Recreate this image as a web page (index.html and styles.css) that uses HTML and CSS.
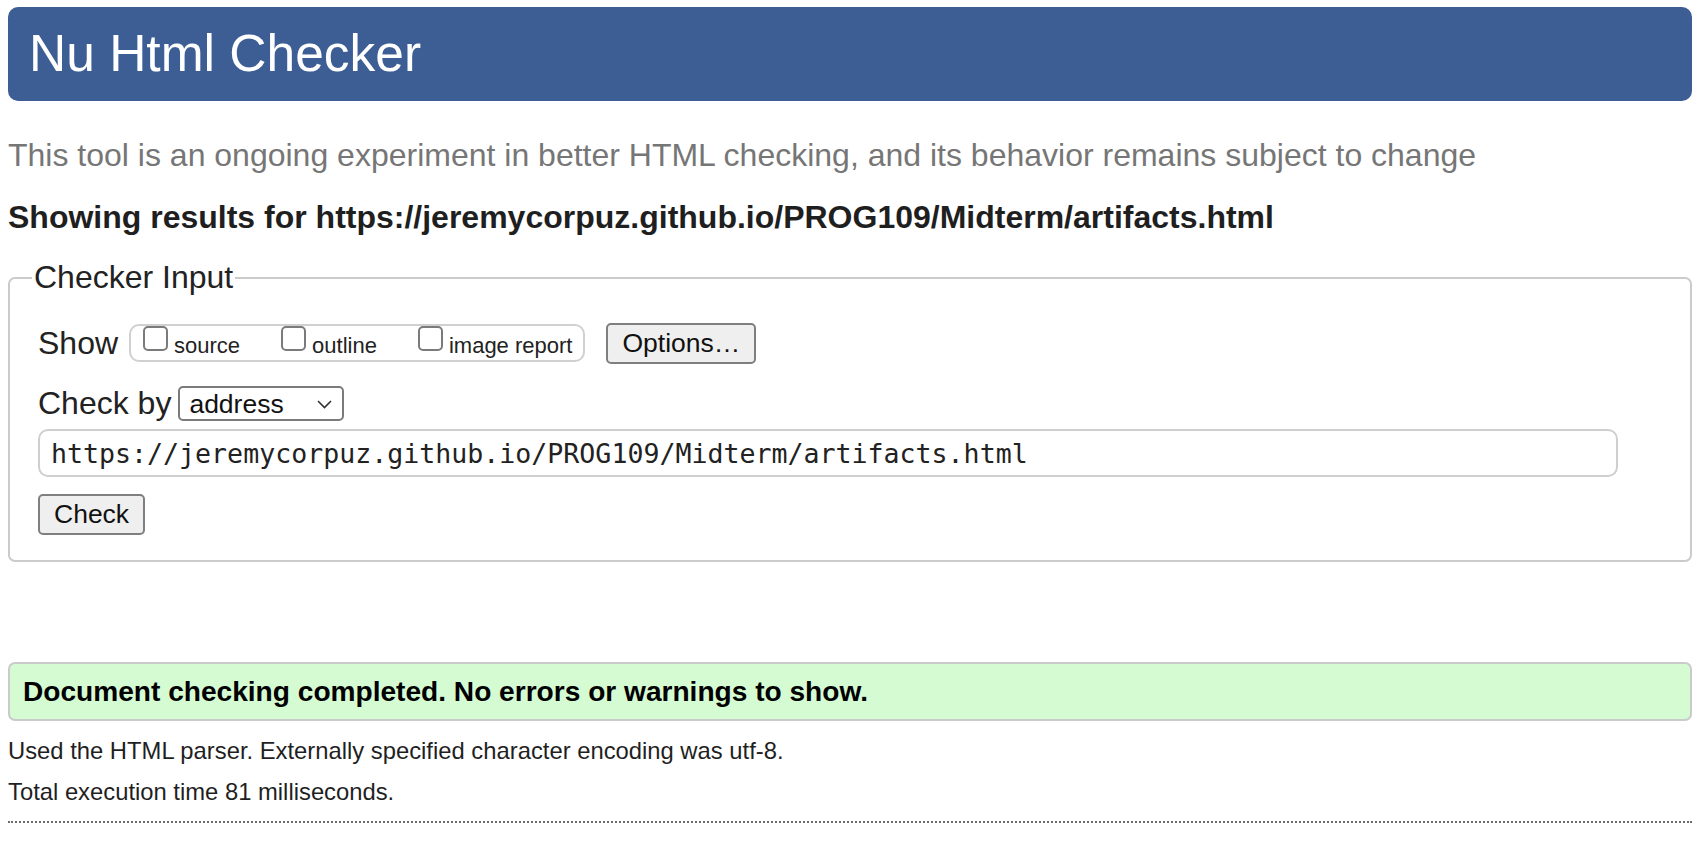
FILE: index.html
```html
<!DOCTYPE html>
<html lang="en">
<head>
<meta charset="utf-8">
<title>Nu Html Checker</title>
<link rel="stylesheet" href="styles.css">
</head>
<body>
<h1 class="banner">Nu Html Checker</h1>
<p class="lede">This tool is an ongoing experiment in better HTML checking, and its behavior remains subject to change</p>
<p class="results-for">Showing results for https://jeremycorpuz.github.io/PROG109/Midterm/artifacts.html</p>
<form class="checker">
  <fieldset class="input-set">
    <legend class="input-legend">Checker Input</legend>
    <div class="input-body">
      <div class="row show-row">
        <span class="row-label">Show</span>
        <div class="toggles">
          <label class="toggle"><input type="checkbox" class="box"><span class="toggle-text">source</span></label>
          <label class="toggle"><input type="checkbox" class="box"><span class="toggle-text">outline</span></label>
          <label class="toggle"><input type="checkbox" class="box"><span class="toggle-text">image report</span></label>
        </div>
        <button type="button" class="btn options">Options…</button>
      </div>
      <div class="row by-row">
        <label class="row-label" for="by">Check by</label>
        <span class="select-wrap">
          <select id="by" class="by-select"><option>address</option></select>
          <svg class="chev" viewBox="0 0 15 9" aria-hidden="true"><path d="M1 1 L7.5 7.5 L14 1" fill="none" stroke="#333" stroke-width="1.6"/></svg>
        </span>
      </div>
      <input class="url" type="text" value="https://jeremycorpuz.github.io/PROG109/Midterm/artifacts.html">
      <div class="submit-row"><button type="button" class="btn check">Check</button></div>
    </div>
  </fieldset>
</form>
<div class="success"><p class="success-text">Document checking completed. No errors or warnings to show.</p></div>
<p class="meta meta-first">Used the HTML parser. Externally specified character encoding was utf-8.</p>
<p class="meta meta-second">Total execution time 81 milliseconds.</p>
<hr class="rule">
</body>
</html>
```
FILE: styles.css
```css
html { background: #fff; }
body {
  margin: 0;
  padding: 7px 14px 40px 8px;
  font-family: "Liberation Sans", Arial, Helvetica, sans-serif;
  color: #222;
  background: #fff;
}
.banner {
  margin: 0;
  height: 94px;
  display: flex;
  align-items: center;
  padding-left: 21px;
  background: #3d5e94;
  color: #fff;
  font-size: 51.5px;
  font-weight: normal;
  line-height: 1;
  border-radius: 10px;
}
.lede {
  margin: 36px 0 0;
  font-size: 32px;
  line-height: 37px;
  color: #767676;
}
.results-for {
  margin: 25px 0 0;
  font-size: 32px;
  line-height: 37px;
  font-weight: bold;
  color: #1f1f1f;
}
.checker { margin: 23px 0 0; }
.input-set {
  margin: 0;
  min-width: 0;
  padding: 26px 27px 25px 22px;
  border: 2px solid #cbcbcb;
  border-radius: 7px;
}
.input-legend {
  padding: 0 2px;
  font-size: 32px;
  line-height: 37px;
  color: #222;
}
.input-body { padding-left: 6px; }
.row { display: flex; align-items: center; }
.show-row { height: 42px; }
.row-label {
  font-size: 32px;
  line-height: 37px;
  color: #222;
}
.toggles {
  margin-left: 11px;
  display: flex;
  align-items: center;
  gap: 41px;
  height: 38px;
  box-sizing: border-box;
  border: 2px solid #d0d0d0;
  border-radius: 10px;
  padding: 0 11px 0 12px;
}
.toggle {
  display: flex;
  align-items: center;
  gap: 6px;
  height: 100%;
  font-size: 22px;
  color: #222;
}
.toggle-text { padding-top: 6px; }
.box {
  appearance: none;
  -webkit-appearance: none;
  align-self: flex-start;
  margin: 0;
  width: 25px;
  height: 25px;
  box-sizing: border-box;
  border: 2px solid #7b7b7b;
  border-radius: 5px;
  background: #fff;
}
.btn {
  font-family: "Liberation Sans", Arial, Helvetica, sans-serif;
  font-size: 26.5px;
  height: 41px;
  padding: 0 14px;
  background: #efefef;
  border: 2px solid #7f7f7f;
  border-radius: 5px;
  color: #111;
}
.options { margin-left: 21px; }
.by-row { margin-top: 21px; height: 37px; }
.select-wrap {
  position: relative;
  display: inline-flex;
  margin-left: 7px;
}
.by-select {
  appearance: none;
  -webkit-appearance: none;
  width: 166px;
  height: 35px;
  margin: 0;
  padding: 0 0 0 9px;
  font-family: "Liberation Sans", Arial, Helvetica, sans-serif;
  font-size: 26.5px;
  color: #111;
  background: #fff;
  border: 2px solid #7b7b7b;
  border-radius: 5px;
}
.chev {
  position: absolute;
  right: 12px;
  top: 50%;
  margin-top: -4px;
  width: 15px;
  height: 9px;
  pointer-events: none;
}
.url {
  display: block;
  margin: 7px 0 0;
  width: 1580px;
  height: 48px;
  box-sizing: border-box;
  padding: 0 11px;
  border: 2px solid #cfcfcf;
  border-radius: 10px;
  font-family: "DejaVu Sans Mono", "Liberation Mono", monospace;
  font-size: 26.6px;
  color: #222;
  background: #fff;
}
.submit-row { display: flex; margin-top: 17px; }
.success {
  margin-top: 100px;
  height: 59px;
  box-sizing: border-box;
  display: flex;
  align-items: center;
  padding-left: 13px;
  background: #d5fbd3;
  border: 2px solid #cacaca;
  border-radius: 7px;
}
.success-text {
  margin: 0;
  font-size: 28.1px;
  font-weight: bold;
  color: #000;
}
.meta {
  margin: 0;
  font-size: 23.8px;
  line-height: 27px;
  color: #1f1f1f;
}
.meta-first { margin-top: 16px; }
.meta-second { margin-top: 14px; }
.rule {
  margin: 16px 0 0;
  height: 0;
  border: 0;
  border-top: 2px dotted #6b6b6b;
}
```
